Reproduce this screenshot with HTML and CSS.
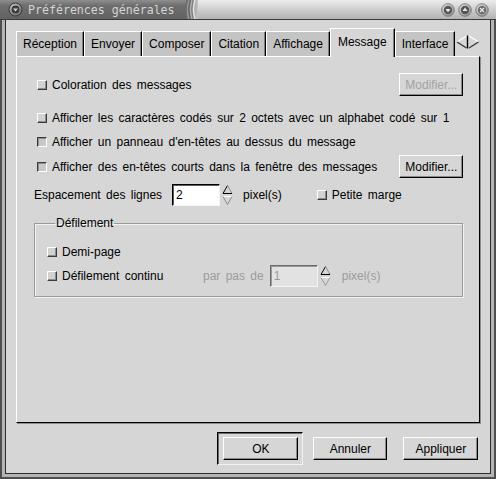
FILE: index.html
```html
<!DOCTYPE html>
<html lang="fr">
<head>
<meta charset="utf-8">
<title>Préférences générales</title>
<link rel="stylesheet" href="styles.css">
</head>
<body>
<div class="window">
  <div class="titlebar">
    <div class="tb-left">
      <svg class="tb-menu" viewBox="0 0 15 15" width="15" height="15">
        <defs>
          <radialGradient id="gm" cx="40%" cy="35%" r="70%">
            <stop offset="0" stop-color="#d8d8d8"/>
            <stop offset="1" stop-color="#6a6a6a"/>
          </radialGradient>
        </defs>
        <circle cx="7.5" cy="7.5" r="6.5" fill="url(#gm)" stroke="#3a3a3a" stroke-width="1"/>
        <circle cx="7.5" cy="7.5" r="4" fill="#3c3c3c"/>
        <path d="M5 6.5 L10 6.5 L7.5 9.5 Z" fill="#cfcfcf"/>
      </svg>
      <span class="tb-title">Préférences générales</span>
    </div>
    <svg class="tb-ridges" viewBox="0 0 12 19" width="12" height="19">
      <defs>
        <linearGradient id="gr" x1="0" x2="1" y1="0" y2="0">
          <stop offset="0" stop-color="#6a6a6a"/>
          <stop offset="1" stop-color="#c4c4c4"/>
        </linearGradient>
      </defs>
      <rect x="0" y="0" width="12" height="19" fill="url(#gr)"/>
      <path d="M3 0 Q0 9.5 3 19" stroke="#9a9a9a" stroke-width="1.2" fill="none"/>
      <path d="M6 0 Q3 9.5 6 19" stroke="#b0b0b0" stroke-width="1.2" fill="none"/>
      <path d="M9 0 Q6 9.5 9 19" stroke="#e4e4e4" stroke-width="1.4" fill="none"/>
      <path d="M4.2 0 Q1.2 9.5 4.2 19" stroke="#555" stroke-width="0.8" fill="none"/>
      <path d="M7.2 0 Q4.2 9.5 7.2 19" stroke="#777" stroke-width="0.8" fill="none"/>
    </svg>
    <div class="tb-right">
      <svg class="tb-btn" viewBox="0 0 14 14" width="14" height="14">
        <defs>
          <radialGradient id="gb" cx="40%" cy="35%" r="70%">
            <stop offset="0" stop-color="#f4f4f4"/>
            <stop offset="1" stop-color="#8c8c8c"/>
          </radialGradient>
        </defs>
        <circle cx="7" cy="7" r="6.3" fill="url(#gb)" stroke="#707070" stroke-width="0.8"/>
        <circle cx="7" cy="7" r="4.2" fill="#555"/>
        <path d="M4.5 6 L9.5 6 L7 9.5 Z" fill="#e8e8e8"/>
      </svg>
      <svg class="tb-btn" viewBox="0 0 14 14" width="14" height="14">
        <circle cx="7" cy="7" r="6.3" fill="url(#gb)" stroke="#707070" stroke-width="0.8"/>
        <circle cx="7" cy="7" r="4.2" fill="#555"/>
        <path d="M4.5 8 L9.5 8 L7 4.5 Z" fill="#e8e8e8"/>
      </svg>
      <svg class="tb-btn" viewBox="0 0 14 14" width="14" height="14">
        <circle cx="7" cy="7" r="6.3" fill="url(#gb)" stroke="#707070" stroke-width="0.8"/>
        <circle cx="7" cy="7" r="4.2" fill="#6a6a6a"/>
        <path d="M5 5 L9 9 M9 5 L5 9" stroke="#e8e8e8" stroke-width="1.3"/>
      </svg>
    </div>
  </div>

  <div class="frame">
    <div class="body">
      <div class="notebook">
        <div class="tabs">
          <div class="tab">Réception</div>
          <div class="tab">Envoyer</div>
          <div class="tab">Composer</div>
          <div class="tab">Citation</div>
          <div class="tab">Affichage</div>
          <div class="tab active">Message</div>
          <div class="tab">Interface</div>
          <svg class="tab-scroll" viewBox="0 0 24 14" width="24" height="14">
            <path d="M10.5 1 L1 7" stroke="#fff" stroke-width="1.2" fill="none"/>
            <path d="M1 7 L10.5 13" stroke="#333" stroke-width="1.2" fill="none"/>
            <path d="M11.5 0.5 L11.5 13.5" stroke="#000" stroke-width="1.4"/>
            <path d="M13 1 L22.5 7" stroke="#fff" stroke-width="1.2" fill="none"/>
            <path d="M22.5 7 L13 13" stroke="#333" stroke-width="1.2" fill="none"/>
          </svg>
        </div>

        <div class="panel">
          <div class="row r1 chk-row">
            <span class="check"></span>
            <span class="label">Coloration des messages</span>
            <button class="btn btn-mod" disabled>Modifier...</button>
          </div>
          <div class="row r2 chk-row">
            <span class="check"></span>
            <span class="label">Afficher les caractères codés sur 2 octets avec un alphabet codé sur 1</span>
          </div>
          <div class="row r3 chk-row">
            <span class="check on"></span>
            <span class="label">Afficher un panneau d'en-têtes au dessus du message</span>
          </div>
          <div class="row r4 chk-row">
            <span class="check on"></span>
            <span class="label">Afficher des en-têtes courts dans la fenêtre des messages</span>
            <button class="btn btn-mod">Modifier...</button>
          </div>
          <div class="row r5">
            <span class="label">Espacement des lignes</span>
            <span class="spin-input sp-line">2</span>
            <svg class="spin" viewBox="0 0 11 22" width="11" height="22">
              <path d="M5.5 1.5 L1 9.5" stroke="#000" stroke-width="1" fill="none"/>
              <path d="M5.5 1.5 L10 9.5" stroke="#888" stroke-width="1" fill="none"/>
              <path d="M1 9.5 L10 9.5" stroke="#000" stroke-width="1"/>
              <path d="M1 12.5 L10 12.5" stroke="#fff" stroke-width="1"/>
              <path d="M1 12.5 L5.5 20.5 L10 12.5" stroke="#8a8a8a" stroke-width="1" fill="none"/>
            </svg>
            <span class="label unit">pixel(s)</span>
            <span class="check marge"></span>
            <span class="label">Petite marge</span>
          </div>

          <fieldset class="group">
            <legend>Défilement</legend>
            <div class="row">
              <span class="check"></span>
              <span class="label">Demi-page</span>
            </div>
            <div class="row">
              <span class="check"></span>
              <span class="label lbl-cont">Défilement continu</span>
              <span class="label dim">par pas de</span>
              <span class="spin-input sp-step">1</span>
              <svg class="spin" viewBox="0 0 11 22" width="11" height="22">
                <path d="M5.5 1.5 L1 9.5" stroke="#000" stroke-width="1" fill="none"/>
                <path d="M5.5 1.5 L10 9.5" stroke="#888" stroke-width="1" fill="none"/>
                <path d="M1 9.5 L10 9.5" stroke="#000" stroke-width="1"/>
                <path d="M1 12.5 L10 12.5" stroke="#fff" stroke-width="1"/>
                <path d="M1 12.5 L5.5 20.5 L10 12.5" stroke="#9a9a9a" stroke-width="1" fill="none"/>
              </svg>
              <span class="label dim unit2">pixel(s)</span>
            </div>
          </fieldset>
        </div>
      </div>

      <div class="actions">
        <div class="default-frame">
          <button class="btn btn-act">OK</button>
        </div>
        <button class="btn btn-act btn-cancel">Annuler</button>
        <button class="btn btn-act btn-apply">Appliquer</button>
      </div>
    </div>
  </div>
</div>
</body>
</html>
```

FILE: styles.css
```css
* { box-sizing: border-box; }
html, body { margin: 0; padding: 0; }
body {
  width: 496px;
  height: 479px;
  overflow: hidden;
  background: #d6d6d6;
  font-family: "Liberation Sans", Arial, Helvetica, sans-serif;
  font-size: 12px;
  color: #000;
}

.window {
  width: 496px;
  height: 479px;
  display: flex;
  flex-direction: column;
}

/* ---------- title bar ---------- */
.titlebar {
  flex: none;
  height: 20px;
  display: flex;
  border-bottom: 1px solid #3a3a3a;
}
.tb-left {
  width: 186px;
  display: flex;
  align-items: center;
  padding-left: 8px;
  background: linear-gradient(#8e8e8e, #6e6e6e 30%, #626262);
}
.tb-menu { flex: none; }
.tb-title {
  margin-left: 5px;
  font-family: "DejaVu Sans Mono", monospace;
  font-size: 11.6px;
  color: #d4d4d4;
  white-space: nowrap;
}
.tb-ridges { flex: none; display: block; }
.tb-right {
  flex: 1;
  display: flex;
  justify-content: flex-end;
  align-items: center;
  gap: 3px;
  padding-right: 7px;
  background: linear-gradient(#ececec, #d2d2d2 45%, #b2b2b2);
}
.tb-btn { display: block; }

/* ---------- frame ---------- */
.frame {
  flex: 1;
  display: flex;
  background: #b4b4b4;
  border-left: 2px solid #4e4e4e;
  border-right: 2px solid #4e4e4e;
  border-bottom: 2px solid #4e4e4e;
  padding: 0 3px 3px 3px;
}
.body {
  flex: 1;
  display: flex;
  flex-direction: column;
  background: #d6d6d6;
  border-left: 1px solid #2c2c2c;
  border-right: 1px solid #2c2c2c;
  border-bottom: 1px solid #2c2c2c;
  padding: 8px 10px 0 10px;
}

/* ---------- notebook ---------- */
.notebook {
  flex: 1;
  display: flex;
  flex-direction: column;
}
.tabs {
  height: 28px;
  display: flex;
  align-items: flex-end;
  position: relative;
  z-index: 1;
}
.tab {
  height: 25px;
  padding: 0 6px 0 6px;
  line-height: 24px;
  background: #c4c4c4;
  border-top: 1px solid #fff;
  border-left: 1px solid #fff;
  border-right: 1px solid #000;
  box-shadow: inset -1px 0 0 #7e7e7e;
  white-space: nowrap;
}
.tab.active {
  height: 29px;
  margin-bottom: -1px;
  line-height: 26px;
  background: #d6d6d6;
  padding: 0 7px 0 7px;
}
.tab-scroll {
  align-self: flex-start;
  margin-top: 7px;
  margin-left: 1px;
}

.panel {
  flex: 1;
  background: #d6d6d6;
  border-top: 1px solid #fff;
  border-left: 1px solid #fff;
  border-right: 1px solid #000;
  border-bottom: 1px solid #000;
  box-shadow: 1px 1px 0 #8e8e8e;
  padding: 16px 16px 0 17px;
}

.row {
  display: flex;
  align-items: center;
  height: 24px;
  white-space: nowrap;
  word-spacing: 2px;
}
.row.r1 { height: 23px; margin-bottom: 10px; }
.row.r4 { height: 25px; }
.row.r5 { margin-top: 4px; }
.chk-row { padding-left: 3px; }

.check {
  flex: none;
  width: 10px;
  height: 10px;
  margin-right: 5px;
  background: #d2d2d2;
  border-top: 1px solid #fff;
  border-left: 1px solid #fff;
  border-right: 1px solid #3a3a3a;
  border-bottom: 1px solid #3a3a3a;
  box-shadow: inset -1px -1px 0 #8c8c8c;
}
.check.on {
  background: #c8c8c8;
  border-top: 1px solid #3a3a3a;
  border-left: 1px solid #3a3a3a;
  border-right: 1px solid #fff;
  border-bottom: 1px solid #fff;
  box-shadow: inset 1px 1px 0 #8c8c8c;
}

.btn {
  font: inherit;
  color: #000;
  height: 23px;
  padding: 0;
  background: #d6d6d6;
  border-top: 1px solid #fff;
  border-left: 1px solid #fff;
  border-right: 1px solid #000;
  border-bottom: 1px solid #000;
  border-radius: 0;
  box-shadow: inset -1px -1px 0 #8a8a8a;
  word-spacing: normal;
}
.btn:disabled { color: #a2a2a2; }
.btn-mod {
  width: 64px;
  margin-left: auto;
}

.spin-input {
  flex: none;
  width: 48px;
  height: 22px;
  line-height: 20px;
  padding-left: 3px;
  background: #fff;
  border-top: 1px solid #000;
  border-left: 1px solid #000;
  border-right: 1px solid #f4f4f4;
  border-bottom: 1px solid #f4f4f4;
  box-shadow: inset 1px 1px 0 #5a5a5a;
}
.sp-line { margin-left: 10px; }
.sp-step {
  background: #e2e2e2;
  color: #9a9a9a;
  border-top-color: #6a6a6a;
  border-left-color: #6a6a6a;
  box-shadow: inset 1px 1px 0 #9a9a9a;
}
.spin { flex: none; margin-left: 2px; display: block; }
.unit { margin-left: 10px; }
.marge { margin-left: 35px; }

.group {
  margin: 9px 0 0 0;
  padding: 10px 0 8px 12px;
  border: 1px solid #9a9a9a;
  box-shadow: 1px 1px 0 #f2f2f2, inset 1px 1px 0 #f2f2f2;
  min-width: 0;
}
.group legend {
  margin-left: 8px;
  padding: 0 1px;
  line-height: 14px;
}
.lbl-cont { width: 141px; }
.dim { color: #9c9c9c; }
.dim + .spin-input { margin-left: 6px; }
.unit2 { margin-left: 11px; }

/* ---------- actions ---------- */
.actions {
  flex: none;
  height: 50px;
  display: flex;
  justify-content: flex-end;
  align-items: flex-start;
  padding: 9px 2px 0 0;
}
.default-frame {
  padding: 4px 4px 4px 5px;
  border-top: 1px solid #000;
  border-left: 1px solid #000;
  border-right: 1px solid #f2f2f2;
  border-bottom: 1px solid #f2f2f2;
  box-shadow: inset 1px 1px 0 #6a6a6a;
  margin-right: 10px;
}
.btn-act { width: 75px; display: block; }
.btn-cancel { width: 74px; margin-top: 5px; margin-right: 16px; }
.btn-apply { margin-top: 5px; }
```
